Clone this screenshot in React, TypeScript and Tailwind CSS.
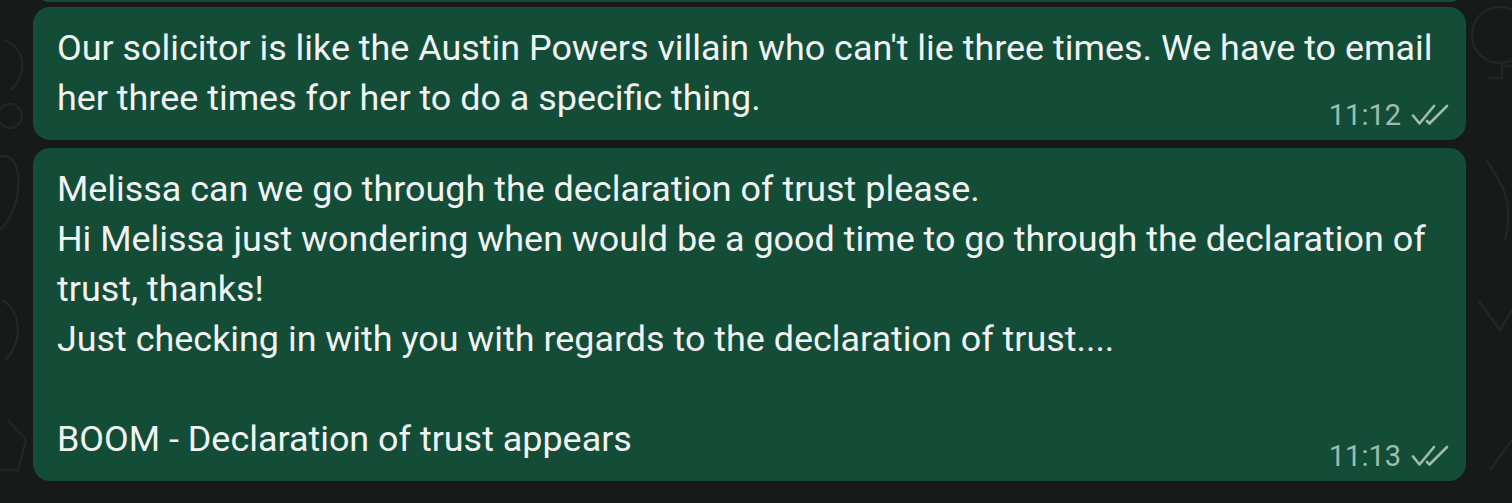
import React from 'react';

interface IBubbleProps {
  lines: string[];
  time: string;
  className?: string;
}

const DoubleCheck: React.FC = () => (
  <svg
    width="38"
    height="24"
    viewBox="0 0 38 24"
    fill="none"
    stroke="currentColor"
    strokeWidth="2.6"
    strokeLinecap="round"
    strokeLinejoin="round"
  >
    <path d="M2 12.5 L8.5 20.5 L23 3" />
    <path d="M16 18 L18.5 20.5 L36 3" />
  </svg>
);

const Bubble: React.FC<IBubbleProps> = ({ lines, time, className }) => (
  <div
    className={`relative w-full shrink-0 rounded-[17px] bg-[#144d37] pl-6 pr-6 pt-[16px] pb-[17px] ${className ?? ''}`}
  >
    <div className="text-[35.9px] leading-[50px] text-[#f1f3f2] whitespace-pre-wrap">
      {lines.map((line, i) => (
        <div key={i} className="min-h-[50px]">
          {line}
        </div>
      ))}
    </div>
    <div className="absolute right-[17px] bottom-[10px] flex items-center gap-[10px] text-[29px] leading-[30px] text-[#9fbcad]">
      <span>{time}</span>
      <DoubleCheck />
    </div>
  </div>
);

const App: React.FC = () => {
  return (
    <div
      className="relative h-[503px] w-[1512px] overflow-hidden bg-[#181a1a]"
      style={{ fontFamily: 'Roboto, "Noto Sans", sans-serif' }}
    >
      <svg
        className="absolute inset-0 h-full w-full"
        fill="none"
        stroke="#232626"
        strokeWidth="2.5"
      >
        <circle cx="10" cy="116" r="12" />
        <path d="M4 40 C 30 50, 25 80, 10 90" />
        <path d="M-5 160 C 20 140, 30 200, 0 230" />
        <path d="M2 300 C 20 310, 25 340, 5 360" />
        <path d="M8 420 L 26 440 L 18 470 L -5 470" />
        <circle cx="1500" cy="35" r="28" />
        <path d="M1488 78 h 14 v -12 h 12" />
        <path d="M1486 160 C 1500 180, 1515 200, 1505 240" />
        <path d="M1478 300 L 1500 330 L 1512 310" />
        <path d="M1490 470 L 1512 440" />
      </svg>
      <div className="relative flex h-full flex-col justify-end pl-[33px] pr-[46px] pb-[22px]">
        <div className="h-[60px] w-full shrink-0 rounded-b-[17px] bg-[#144d37]" />
        <Bubble
          className="mt-[5px]"
          lines={[
            "Our solicitor is like the Austin Powers villain who can't lie three times. We have to email",
            'her three times for her to do a specific thing.',
          ]}
          time="11:12"
        />
        <Bubble
          className="mt-2"
          lines={[
            'Melissa can we go through the declaration of trust please.',
            'Hi Melissa just wondering when would be a good time to go through the declaration of',
            'trust, thanks!',
            'Just checking in with you with regards to the declaration of trust....',
            '',
            'BOOM - Declaration of trust appears',
          ]}
          time="11:13"
        />
      </div>
    </div>
  );
};

export default App;
